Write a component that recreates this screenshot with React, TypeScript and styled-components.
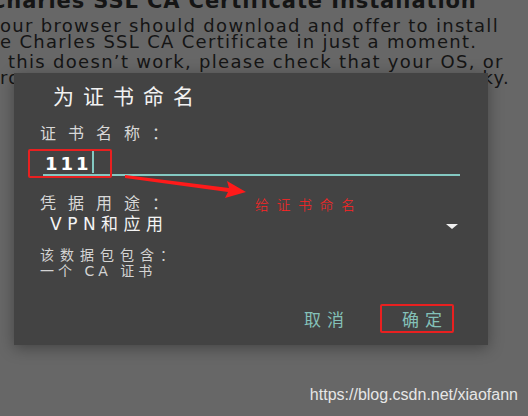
import styled, { createGlobalStyle } from "styled-components";

const GlobalStyle = createGlobalStyle`
  html, body {
    margin: 0;
    padding: 0;
    background: #676767;
  }
  body {
    font-family: "DejaVu Sans", "Noto Sans CJK SC", sans-serif;
  }
`;

const CJK = `"DejaVu Sans", "Noto Sans CJK SC", sans-serif`;

const Screen = styled.div`
  position: relative;
  width: 528px;
  height: 416px;
  overflow: hidden;
  background: #676767;
`;

const Page = styled.div`
  color: #151515;
  font-family: "DejaVu Sans", sans-serif;
`;

const PageTitle = styled.h1`
  margin: -11px 0 0 -10px;
  font-size: 21px;
  line-height: 24px;
  font-weight: bold;
  white-space: nowrap;
  letter-spacing: 0.9px;
`;

const Para = styled.p<{ $indent?: number; $gap?: number }>`
  margin: ${(p) => p.$gap ?? 4}px 0 0 ${(p) => p.$indent ?? 0}px;
  font-size: 18px;
  line-height: 16px;
  white-space: nowrap;
  letter-spacing: 1.3px;
`;

const Line = styled.span`
  display: flex;
  justify-content: space-between;
  padding-right: 18px;
`;

const Dialog = styled.div`
  position: absolute;
  left: 14px;
  top: 73px;
  width: 474px;
  height: 272px;
  box-sizing: border-box;
  padding: 12px 28px 0 26px;
  background: #434343;
  box-shadow: 0 3px 14px rgba(0, 0, 0, 0.35);
  color: #dcdcdc;
  font-family: ${CJK};
`;

const DialogTitle = styled.div`
  margin-left: 13px;
  font-size: 21px;
  line-height: 24px;
  letter-spacing: 9px;
  color: #f2f2f2;
`;

const Label = styled.div<{ $gap: number }>`
  margin-top: ${(p) => p.$gap}px;
  font-size: 16px;
  line-height: 20px;
  letter-spacing: 12px;
  color: #d8d8d8;
`;

const InputRow = styled.div`
  position: relative;
  margin: 6px 0 0 3px;
  height: 24px;
  border-bottom: 2px solid #84c9c2;
  display: flex;
  align-items: center;
  padding-left: 2px;
`;

const InputText = styled.span`
  font-family: "DejaVu Sans", sans-serif;
  font-weight: bold;
  font-size: 18px;
  letter-spacing: 3px;
  color: #ffffff;
  padding-top: 3px;
`;

const Caret = styled.span`
  display: inline-block;
  width: 2px;
  height: 22px;
  background: #84c9c2;
`;

const MarkBox = styled.span`
  position: absolute;
  left: -15px;
  top: -1px;
  width: 84px;
  height: 29px;
  box-sizing: border-box;
  border: 2px solid #e82020;
  border-radius: 2px;
`;

const SelectRow = styled.div`
  display: flex;
  align-items: center;
  justify-content: space-between;
  padding: 0 2px 0 10px;
  font-size: 17px;
  line-height: 20px;
  letter-spacing: 5.5px;
  color: #f4f4f4;
`;

const Caretdown = styled.span`
  width: 0;
  height: 0;
  margin-top: 4px;
  border-left: 6px solid transparent;
  border-right: 6px solid transparent;
  border-top: 5px solid #f0f0f0;
`;

const Info = styled.div`
  margin-top: 13px;
  font-size: 14px;
  line-height: 16px;
  color: #d4d4d4;
`;

const InfoLine = styled.div<{ $spacing: number }>`
  letter-spacing: ${(p) => p.$spacing}px;
`;

const Actions = styled.div`
  display: flex;
  justify-content: flex-end;
  gap: 42px;
  margin-top: 25px;
  padding-right: 10px;
`;

const ActionButton = styled.button<{ $marked?: boolean }>`
  position: relative;
  width: 56px;
  height: 29px;
  padding: 0 0 0 6px;
  border: none;
  background: transparent;
  font-family: ${CJK};
  font-size: 17px;
  letter-spacing: 6px;
  color: #84c1b9;
  &::after {
    content: "";
    display: ${(p) => (p.$marked ? "block" : "none")};
    position: absolute;
    left: -14px;
    right: -4px;
    top: 0;
    bottom: 0;
    border: 2px solid #e82020;
    border-radius: 2px;
  }
`;

const Arrow = styled.svg`
  position: absolute;
  left: 106px;
  top: 97px;
`;

const Note = styled.span`
  position: absolute;
  left: 241px;
  top: 122px;
  font-size: 14px;
  line-height: 18px;
  letter-spacing: 7.5px;
  color: #ff2424;
  font-family: "Noto Sans CJK SC", sans-serif;
  font-weight: 300;
`;

const Watermark = styled.span`
  position: absolute;
  right: 10px;
  bottom: 12px;
  font-family: "Liberation Sans", Arial, sans-serif;
  font-size: 16px;
  color: #e6e6e6;
`;

export default function App() {
  return (
    <Screen>
      <GlobalStyle />
      <Page>
        <PageTitle>Charles SSL CA Certificate Installation</PageTitle>
        <Para $gap={5}>our browser should download and offer to install</Para>
        <Para $gap={0}>e Charles SSL CA Certificate in just a moment.</Para>
        <Para $indent={8}>this doesn’t work, please check that your OS, or</Para>
        <Para $gap={0}>
          <Line>
            <span>ro</span>
            <span>ky.</span>
          </Line>
        </Para>
      </Page>

      <Dialog>
        <DialogTitle>为证书命名</DialogTitle>
        <Label $gap={15}>证书名称：</Label>
        <InputRow>
          <InputText>111</InputText>
          <Caret />
          <MarkBox />
        </InputRow>
        <Label $gap={18}>凭据用途：</Label>
        <SelectRow>
          <span>VPN和应用</span>
          <Caretdown />
        </SelectRow>
        <Info>
          <InfoLine $spacing={6}>该数据包包含：</InfoLine>
          <InfoLine $spacing={4}>一个 CA 证书</InfoLine>
        </Info>
        <Actions>
          <ActionButton>取消</ActionButton>
          <ActionButton $marked>确定</ActionButton>
        </Actions>

        <Arrow width="130" height="30" viewBox="0 0 130 30">
          <polygon points="5,5 109,18 107,11 126,22 105,28 108,22 5,8" fill="#ff1a1a" />
        </Arrow>
        <Note>给证书命名</Note>
      </Dialog>

      <Watermark>https://blog.csdn.net/xiaofann</Watermark>
    </Screen>
  );
}
